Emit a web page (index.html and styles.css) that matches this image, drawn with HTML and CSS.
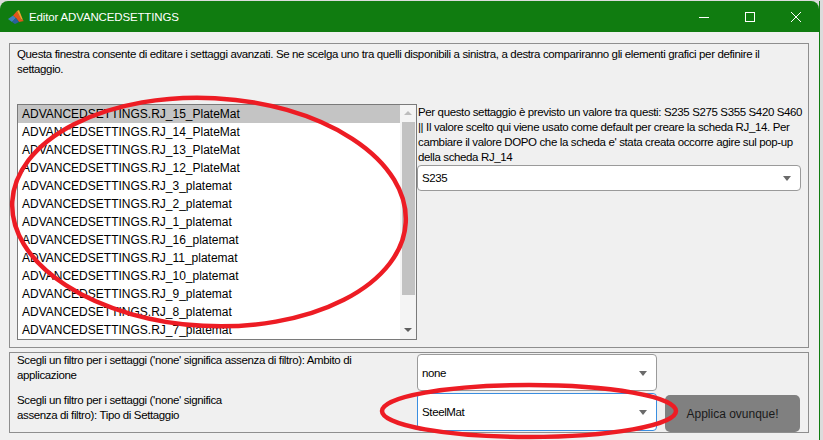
FILE: index.html
```html
<!DOCTYPE html>
<html lang="it">
<head>
<meta charset="utf-8">
<title>Editor ADVANCEDSETTINGS</title>
<link rel="stylesheet" href="styles.css">
</head>
<body>
<div class="window">
  <header class="titlebar">
    <svg class="app-icon" viewBox="0 0 16 16" width="16" height="16" aria-hidden="true">
      <polygon points="0,10 5,6.5 8,9 4,13" fill="#3f7fbf"/>
      <polygon points="5,6.5 9,2 13,10 16,12 11,13 8,9" fill="#e2541c"/>
      <polygon points="9,2 11,1 15,11 13,10" fill="#f0a030"/>
      <polygon points="4,13 8,9 11,13 7,15" fill="#2a5f9e"/>
    </svg>
    <span class="title">Editor ADVANCEDSETTINGS</span>
    <div class="controls">
      <span class="ctl"><svg width="10" height="10" viewBox="0 0 10 10"><line x1="0" y1="5.5" x2="10" y2="5.5" stroke="#fff" stroke-width="1"/></svg></span>
      <span class="ctl"><svg width="10" height="10" viewBox="0 0 10 10"><rect x="0.5" y="0.5" width="9" height="9" fill="none" stroke="#fff" stroke-width="1"/></svg></span>
      <span class="ctl"><svg width="10" height="10" viewBox="0 0 10 10"><path d="M0 0L10 10M10 0L0 10" stroke="#fff" stroke-width="1"/></svg></span>
    </div>
  </header>
  <main class="client">
    <section class="panel panel-top">
      <p class="intro">Questa finestra consente di editare i settaggi avanzati. Se ne scelga uno tra quelli disponibili a sinistra, a destra compariranno gli elementi grafici per definire il<br>settaggio.</p>
      <div class="main-row">
        <div class="listbox">
          <ul class="items">
            <li class="selected">ADVANCEDSETTINGS.RJ_15_PlateMat</li>
            <li>ADVANCEDSETTINGS.RJ_14_PlateMat</li>
            <li>ADVANCEDSETTINGS.RJ_13_PlateMat</li>
            <li>ADVANCEDSETTINGS.RJ_12_PlateMat</li>
            <li>ADVANCEDSETTINGS.RJ_3_platemat</li>
            <li>ADVANCEDSETTINGS.RJ_2_platemat</li>
            <li>ADVANCEDSETTINGS.RJ_1_platemat</li>
            <li>ADVANCEDSETTINGS.RJ_16_platemat</li>
            <li>ADVANCEDSETTINGS.RJ_11_platemat</li>
            <li>ADVANCEDSETTINGS.RJ_10_platemat</li>
            <li>ADVANCEDSETTINGS.RJ_9_platemat</li>
            <li>ADVANCEDSETTINGS.RJ_8_platemat</li>
            <li>ADVANCEDSETTINGS.RJ_7_platemat</li>
          </ul>
          <div class="scrollbar">
            <span class="arrow arrow-up"></span>
            <span class="thumb"></span>
            <span class="arrow arrow-down"></span>
          </div>
        </div>
        <div class="detail">
          <p class="detail-text">Per questo settaggio è previsto un valore tra questi: S235 S275 S355 S420 S460<br>|| Il valore scelto qui viene usato come default per creare la scheda RJ_14. Per<br>cambiare il valore DOPO che la scheda e' stata creata occorre agire sul pop-up<br>della scheda RJ_14</p>
          <div class="dropdown dd-value"><span>S235</span><span class="caret"></span></div>
        </div>
      </div>
    </section>
    <section class="panel panel-bottom">
      <p class="label label-1">Scegli un filtro per i settaggi ('none' significa assenza di filtro): Ambito di<br>applicazione</p>
      <div class="dropdown dd-scope"><span>none</span><span class="caret"></span></div>
      <p class="label label-2">Scegli un filtro per i settaggi ('none' significa<br>assenza di filtro): Tipo di Settaggio</p>
      <div class="dropdown dd-type focused"><span>SteelMat</span><span class="caret"></span></div>
      <button class="apply">Applica ovunque!</button>
    </section>
  </main>
  <svg class="annotations" width="823" height="440" viewBox="0 0 823 440" aria-hidden="true">
    <ellipse cx="209" cy="212" rx="197" ry="114" transform="rotate(3 209 212)" fill="none" stroke="#ed1c24" stroke-width="4.5"/>
    <ellipse cx="529" cy="411" rx="147" ry="26" fill="none" stroke="#ed1c24" stroke-width="4.5"/>
  </svg>
</div>
</body>
</html>
```

FILE: styles.css
```css
* { box-sizing: border-box; }

html, body {
  margin: 0;
  padding: 0;
  background: #dcdcdc;
  width: 823px;
  height: 440px;
  overflow: hidden;
}

.window {
  position: relative;
  width: 820px;
  height: 440px;
  margin-top: 1px;
  display: flex;
  flex-direction: column;
  border-right: 1px solid #107c10;
  font-family: "Liberation Sans", Arial, sans-serif;
  font-size: 11.5px;
  letter-spacing: -0.37px;
  color: #000;
}

.titlebar {
  height: 31px;
  flex: none;
  background: #107c10;
  border-radius: 8px 8px 0 0;
  display: flex;
  align-items: center;
  color: #fff;
  padding-left: 8px;
  letter-spacing: 0;
}

.app-icon { flex: none; margin-right: 5px; margin-top: 1px; }

.title {
  font-size: 11.5px;
  letter-spacing: -0.15px;
  flex: 1;
}

.controls { display: flex; height: 100%; }
.ctl {
  width: 46px;
  display: flex;
  align-items: center;
  justify-content: center;
}
.ctl svg { display: block; }

.client {
  flex: 1;
  background: #f0f0f0;
  padding: 11px 0 0 9px;
  width: 819px;
}

.panel {
  width: 800px;
  border: 1px solid #8e8e8e;
  background: #f0f0f0;
}

.panel-top {
  height: 305px;
  padding: 3px 7px 0 7px;
}

.intro {
  margin: 0;
  height: 57px;
  line-height: 15px;
  white-space: nowrap;
}

.main-row { display: flex; }

.listbox {
  width: 400px;
  height: 236px;
  border: 1px solid #7a7a7a;
  background: #fff;
  display: flex;
  overflow: hidden;
}

.items {
  list-style: none;
  margin: 0;
  padding: 0;
  flex: 1;
  font-size: 12px;
  letter-spacing: 0;
}

.items li {
  height: 18px;
  line-height: 18px;
  padding-left: 4px;
  white-space: nowrap;
}

.items li.selected { background: #c4c4c4; }

.scrollbar {
  width: 16px;
  flex: none;
  background: #f4f4f4;
  display: flex;
  flex-direction: column;
  align-items: center;
}

.arrow {
  width: 0;
  height: 0;
  border-left: 4px solid transparent;
  border-right: 4px solid transparent;
}
.arrow-up { border-bottom: 4px solid #bdbdbd; margin-top: 6px; }
.arrow-down { border-top: 4px solid #5f5f5f; margin-top: auto; margin-bottom: 7px; }

.thumb {
  width: 13px;
  height: 173px;
  background: #c2c2c2;
  margin-top: 7px;
}

.detail {
  width: 384px;
  padding-top: 1px;
}

.detail-text {
  margin: 0 0 0 1px;
  height: 60px;
  line-height: 15px;
  white-space: nowrap;
}

.dropdown {
  position: relative;
  background: #fff;
  border: 1px solid #9a9a9a;
  border-radius: 4px;
  display: flex;
  align-items: center;
  padding-left: 4px;
}

.dd-value { height: 26px; width: 384px; }

.caret {
  position: absolute;
  right: 9px;
  top: 50%;
  margin-top: -2px;
  width: 0;
  height: 0;
  border-left: 4px solid transparent;
  border-right: 4px solid transparent;
  border-top: 5px solid #6a6a6a;
}

.panel-bottom {
  margin-top: 4px;
  height: 81px;
  padding: 1px 0 0 7px;
  display: grid;
  grid-template-columns: 400px 240px 135px;
  grid-template-rows: 37px 39px;
  row-gap: 2px;
  column-gap: 0;
}

.label {
  margin: -1px 0 0 0;
  line-height: 15px;
  white-space: nowrap;
}
.label-1 { grid-column: 1; grid-row: 1; }
.label-2 { grid-column: 1; grid-row: 2; margin-top: 0; }

.dd-scope { grid-column: 2; grid-row: 1; height: 37px; }
.dd-type { grid-column: 2; grid-row: 2; height: 38px; }
.dropdown.focused { border-color: #3a8ee0; }

.apply {
  grid-column: 3;
  grid-row: 2;
  margin: 2px 0 0 8px;
  height: 37px;
  width: 135px;
  border: none;
  border-radius: 5px;
  background: #808080;
  color: #1a1a1a;
  font-family: "Liberation Sans", Arial, sans-serif;
  font-size: 12px;
  letter-spacing: 0;
  padding: 0;
}

.annotations {
  position: absolute;
  left: 0;
  top: -1px;
  pointer-events: none;
}
```
